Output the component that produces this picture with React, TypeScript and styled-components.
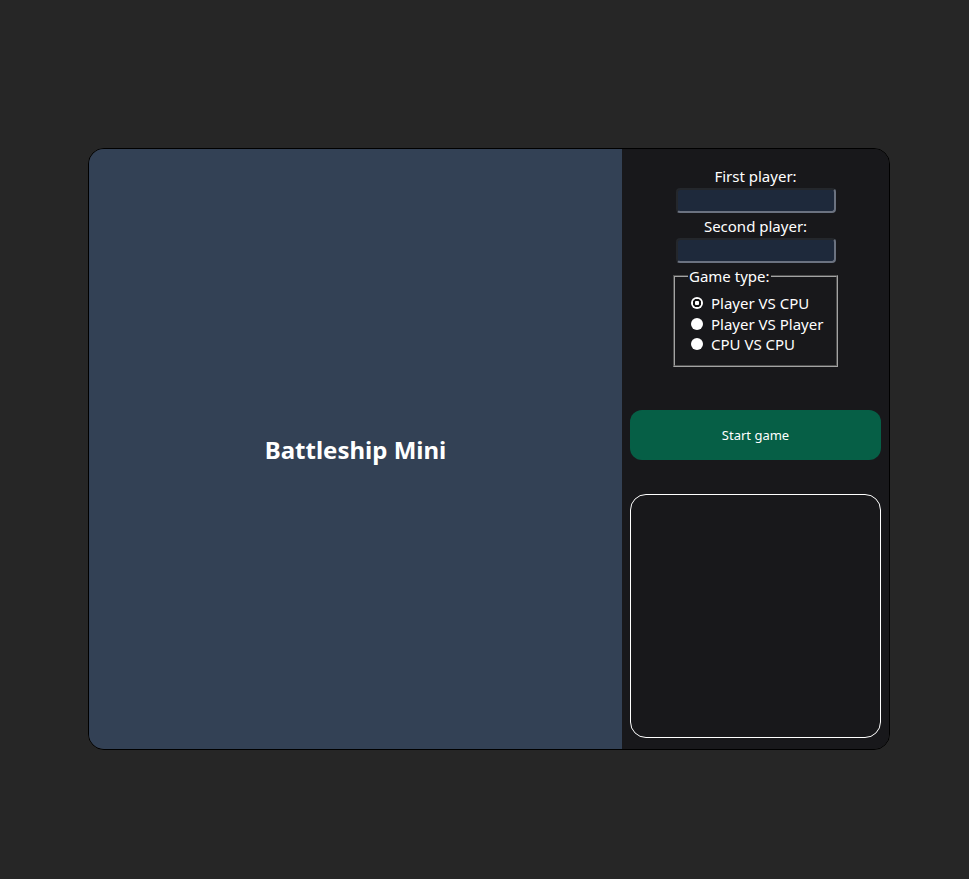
import styled, { createGlobalStyle } from "styled-components";

const GlobalStyle = createGlobalStyle`
  html, body {
    margin: 0;
    background-color: #262626;
    color: #ffffff;
    font-family: "Noto Sans", "Open Sans", sans-serif;
  }
`;

const Page = styled.div`
  padding: 148px 0 0 88px;
  min-height: 879px;
  box-sizing: border-box;
`;

const Board = styled.div`
  display: flex;
  width: 802px;
  height: 602px;
  box-sizing: border-box;
  border: 1px solid #000000;
  border-radius: 16px;
  overflow: hidden;
`;

const Stage = styled.div`
  width: 533px;
  display: flex;
  align-items: center;
  justify-content: center;
  background-color: #334155;
`;

const Title = styled.h1`
  margin: 0;
  font-size: 24px;
  font-weight: 700;
  color: #ffffff;
`;

const Sidebar = styled.div`
  flex: 1;
  display: flex;
  flex-direction: column;
  padding: 16px 8px 11px;
  background-color: #18181b;
`;

const Form = styled.div`
  display: flex;
  flex-direction: column;
  align-items: center;
`;

const Label = styled.label<{ $top?: number }>`
  margin-top: ${(p) => p.$top ?? 0}px;
  font-size: 15px;
  line-height: 22px;
`;

const NameInput = styled.input`
  width: 160px;
  height: 25px;
  box-sizing: border-box;
  margin: 1px 0 0;
  background-color: #1e293b;
  border: 2px inset #6b7280;
  border-radius: 4px;
  color: #ffffff;
`;

const GameType = styled.fieldset`
  margin: 3px 0 0;
  width: 165px;
  box-sizing: border-box;
  padding: 7px 8px 10px 16px;
  border: 2px groove #a3a3a3;
`;

const Legend = styled.legend`
  padding: 0 1px;
  margin-left: -3px;
  font-size: 15px;
  line-height: 20px;
`;

const Option = styled.label`
  display: flex;
  align-items: center;
  gap: 8px;
  font-size: 15px;
  line-height: 20.5px;
`;

const Radio = styled.input`
  appearance: none;
  margin: 0;
  width: 12px;
  height: 12px;
  border-radius: 50%;
  background: #ffffff;

  &:checked {
    background: radial-gradient(
      circle,
      #ffffff 0 2px,
      #111111 2.5px 4px,
      #ffffff 4.5px
    );
  }
`;

const StartButton = styled.button`
  margin-top: 43px;
  height: 50px;
  border: none;
  border-radius: 12px;
  background-color: #065f46;
  color: #ffffff;
  font-family: inherit;
  font-size: 13px;
`;

const Log = styled.div`
  flex: 1;
  margin-top: 34px;
  border: 1px solid #ffffff;
  border-radius: 16px;
`;

export default function App() {
  return (
    <Page>
      <GlobalStyle />
      <Board>
        <Stage>
          <Title>Battleship Mini</Title>
        </Stage>
        <Sidebar>
          <Form>
            <Label htmlFor="first">First player:</Label>
            <NameInput id="first" />
            <Label htmlFor="second" $top={2}>
              Second player:
            </Label>
            <NameInput id="second" />
            <GameType>
              <Legend>Game type:</Legend>
              <Option>
                <Radio type="radio" name="mode" defaultChecked />
                Player VS CPU
              </Option>
              <Option>
                <Radio type="radio" name="mode" />
                Player VS Player
              </Option>
              <Option>
                <Radio type="radio" name="mode" />
                CPU VS CPU
              </Option>
            </GameType>
          </Form>
          <StartButton>Start game</StartButton>
          <Log />
        </Sidebar>
      </Board>
    </Page>
  );
}
